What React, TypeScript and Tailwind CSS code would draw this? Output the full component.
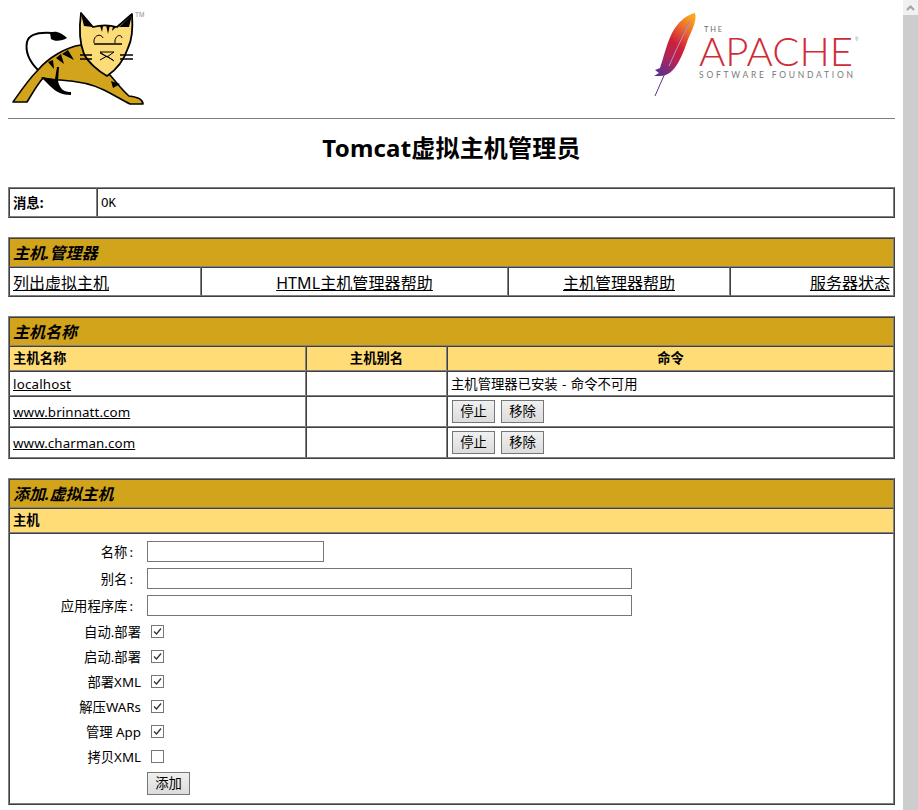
import React from "react";

const font = { fontFamily: '"Noto Sans", "Noto Sans CJK SC", sans-serif' };
const table =
  "w-full table-fixed border-separate border-spacing-0 border border-t-[#808080] border-l-[#808080] border-r-[#404040] border-b-[#404040]";
const cell =
  "border border-t-[#404040] border-l-[#404040] border-r-[#808080] border-b-[#808080] px-[3px] py-0 align-middle";
const textCell =
  "border border-t-[#404040] border-l-[#404040] border-r-[#808080] border-b-[#808080] px-[3px] pt-[2px] pb-0 align-middle";
const titleCell = `${cell} bg-[#d2a41c] h-[29px] text-[16px] font-bold italic text-left`;
const headCell = `${cell} bg-[#ffdc75] h-[25px] text-[13.33px] font-bold`;

function TomcatLogo() {
  return (
    <svg width="140" height="100" viewBox="8 8 140 100" className="block" aria-label="Tomcat logo">
      <path d="M38 70 C30 62 25 52 27 42 C29 34 38 32 52 33" fill="none" stroke="#000" strokeWidth="2" />
      <path d="M50 33 C55 30 62 33 67 38 C62 41 55 42 51 39 Z" fill="#000" />
      <path
        d="M81 45 C66 47 48 58 38 70 C28 80 20 92 13 102 L27 102 C32 94 37 85 43 78 C48 80 54 80 60 80 C78 81 92 84 104 90 C114 95 122 100 130 104 L143 104 C143 100 138 97 129 96 C122 90 117 83 110 75 L96 60 Z"
        fill="#d2a41c"
        stroke="#000"
        strokeWidth="1.6"
        strokeLinejoin="round"
      />
      <path d="M41 77 L50 86 C56 92 62 95 71 95 L71 92 C65 92 60 90 58 81 L59 67 L57 67 L55 79 Z" fill="#000" />
      <path d="M68 50 L74 60 L62 54 Z M56 58 L64 64 L61 54 Z M48 62 L54 69 L53 60 Z M111 81 L120 84 L113 88 Z" fill="#000" />
      <path
        d="M81 13 L93 27 C100 25 110 25 117 27 L132 14 C133 28 132 40 128 48 C124 60 116 70 107 76 C98 71 88 62 84 54 C80 44 79 28 81 13 Z"
        fill="#fbdc78"
        stroke="#000"
        strokeWidth="1.8"
        strokeLinejoin="round"
      />
      <path d="M81 14 L93 27 L84 26 Z M132 15 L119 27 L129 27 Z M106 25 L108 34 L110 25 Z M100 26 L102 32 L103 26 Z M113 26 L112 31 L116 27 Z" fill="#000" />
      <path d="M94 44 H122" stroke="#000" strokeWidth="1.5" />
      <path d="M94 43 C93 35 101 33 103 38 M115 43 C114 36 121 33 122 38" fill="none" stroke="#000" strokeWidth="1" />
      <path d="M80 55 H92 M80 59 H92 M120 55 H133 M120 59 H133" stroke="#000" strokeWidth="1.5" />
      <path d="M100 52 H114 L107 57 Z" fill="none" stroke="#000" strokeWidth="1" />
      <path d="M100 60 L107 56 L114 61 M100 53 L113 60" fill="none" stroke="#000" strokeWidth="1" />
      <text x="135" y="17" fontSize="6.5" fill="#8a8a8a" fontFamily="Liberation Sans">TM</text>
    </svg>
  );
}

function ApacheLogo() {
  return (
    <svg width="212" height="90" viewBox="650 10 212 90" className="block" aria-label="Apache logo">
      <defs>
        <linearGradient id="feather" x1="0.8" y1="0" x2="0.2" y2="1">
          <stop offset="0" stopColor="#f9a51f" />
          <stop offset="0.25" stopColor="#e8622e" />
          <stop offset="0.48" stopColor="#cf2038" />
          <stop offset="0.72" stopColor="#b0245a" />
          <stop offset="1" stopColor="#5f2f8c" />
        </linearGradient>
      </defs>
      <path
        d="M695 13 C686 15 678 22 672 33 C667 43 664 56 660 68 L655 70 L659 73 L654 76 L660 76 C668 76 674 70 678 63 C683 55 686 44 689 37 C693 28 697 20 695 13 Z"
        fill="url(#feather)"
      />
      <path d="M690 21 C680 40 668 66 655 96" fill="none" stroke="#6b2f8a" strokeWidth="1" />
      <path d="M690 21 C684 33 676 50 669 66" fill="none" stroke="#fff" strokeWidth="0.7" opacity="0.7" />
      <text x="704" y="32" fontSize="7.5" fill="#6e6e6e" fontFamily="Lato" textLength="18">THE</text>
      <text x="699" y="66" fontSize="40" fill="#cf2c37" fontFamily="Lato" fontWeight="300" textLength="154" lengthAdjust="spacingAndGlyphs">APACHE</text>
      <text x="699" y="78" fontSize="8.5" fill="#7a7a7a" fontFamily="Lato" textLength="154">SOFTWARE FOUNDATION</text>
      <text x="855" y="41" fontSize="4.5" fill="#8a8a8a" fontFamily="Liberation Sans">®</text>
    </svg>
  );
}

function InputRow({ label, wide }: { label: string; wide?: boolean }) {
  return (
    <div className="flex h-[27px] items-center">
      <span className="w-[120px] pt-[2px] text-right">
        {label}
        <span className="ml-[2px]">:</span>
      </span>
      <span className="w-[14px]" />
      <input
        type="text"
        className={`h-[21px] border border-[#767676] bg-white ${wide ? "w-[485px]" : "w-[177px]"}`}
      />
    </div>
  );
}

function CheckRow({ label, checked }: { label: string; checked: boolean }) {
  return (
    <div className="flex h-[25px] items-center">
      <span className="w-[128px] pt-[2px] text-right">{label}</span>
      <span className="w-[10px]" />
      <span className="flex h-[13px] w-[13px] items-center justify-center border border-[#767676] bg-white">
        {checked && (
          <svg width="11" height="11" viewBox="0 0 11 11">
            <path d="M2 5.5 L4.5 8 L9 2.5" fill="none" stroke="#333" strokeWidth="1.3" />
          </svg>
        )}
      </span>
    </div>
  );
}

function Btn({ children }: { children: React.ReactNode }) {
  return (
    <button
      type="button"
      className="h-[23px] w-[43px] border border-[#767676] bg-linear-to-b from-[#f0f0f0] to-[#dcdcdc] text-[13.33px] text-black"
    >
      {children}
    </button>
  );
}

function HostRow({ name }: { name: string }) {
  return (
    <tr>
      <td className={`${textCell} h-[31px]`}>
        <a href="#" className="tracking-[0.1px] underline">{name}</a>
      </td>
      <td className={cell}></td>
      <td className={cell}>
        <div className="flex gap-[6px] pl-[1px]">
          <Btn>停止</Btn>
          <Btn>移除</Btn>
        </div>
      </td>
    </tr>
  );
}

export default function App() {
  return (
    <div className="flex h-[810px] w-[918px] overflow-hidden bg-white text-[13.33px] text-black" style={font}>
      <main className="w-[903px] shrink-0 px-2">
        <div className="flex h-[118px] items-start justify-between pt-[5px]">
          <div className="pt-[3px] pl-0"><TomcatLogo /></div>
          <div className="pt-[5px] pr-[33px]"><ApacheLogo /></div>
        </div>
        <hr className="border-0 border-t border-[#808080]" />
        <h1 className="mt-[11px] mb-[22px] h-[35px] text-center text-[24px] leading-[35px] font-bold tracking-[0.2px]">
          Tomcat虚拟主机管理员
        </h1>

        <table className={table}>
          <colgroup>
            <col className="w-[88px]" />
            <col />
          </colgroup>
          <tbody>
            <tr>
              <td className={`${textCell} h-[29px] font-bold`}>消息:</td>
              <td className={textCell}>
                <span className="text-[12.5px]" style={{ fontFamily: '"Liberation Mono", monospace' }}>OK</span>
              </td>
            </tr>
          </tbody>
        </table>

        <table className={`${table} mt-[19px]`}>
          <colgroup>
            <col className="w-[192px]" />
            <col className="w-[307px]" />
            <col className="w-[222px]" />
            <col />
          </colgroup>
          <tbody>
            <tr>
              <td colSpan={4} className={titleCell}>主机.管理器</td>
            </tr>
            <tr className="text-[16px]">
              <td className={`${textCell} h-[29px] text-left`}><a href="#" className="underline">列出虚拟主机</a></td>
              <td className={`${textCell} text-center`}><a href="#" className="tracking-[0.1px] underline">HTML主机管理器帮助</a></td>
              <td className={`${textCell} text-center`}><a href="#" className="underline">主机管理器帮助</a></td>
              <td className={`${textCell} text-right`}><a href="#" className="underline">服务器状态</a></td>
            </tr>
          </tbody>
        </table>

        <table className={`${table} mt-[19px]`}>
          <colgroup>
            <col className="w-[297px]" />
            <col className="w-[141px]" />
            <col />
          </colgroup>
          <tbody>
            <tr>
              <td colSpan={3} className={titleCell}>主机名称</td>
            </tr>
            <tr>
              <td className={`${headCell} text-left`}>主机名称</td>
              <td className={`${headCell} text-center`}>主机别名</td>
              <td className={`${headCell} text-center`}>命令</td>
            </tr>
            <tr>
              <td className={`${textCell} h-[25px]`}><a href="#" className="tracking-[0.2px] underline">localhost</a></td>
              <td className={cell}></td>
              <td className={`${textCell} [word-spacing:1px]`}>主机管理器已安装 - 命令不可用</td>
            </tr>
            <HostRow name="www.brinnatt.com" />
            <HostRow name="www.charman.com" />
          </tbody>
        </table>

        <table className={`${table} mt-[19px]`}>
          <tbody>
            <tr>
              <td className={titleCell}>添加.虚拟主机</td>
            </tr>
            <tr>
              <td className={`${headCell} text-left`}>主机</td>
            </tr>
            <tr>
              <td className={`${cell} h-[271px] pt-[4px]`}>
                <div className="flex h-full flex-col">
                  <InputRow label="名称" />
                  <InputRow label="别名" wide />
                  <InputRow label="应用程序库" wide />
                  <CheckRow label="自动.部署" checked />
                  <CheckRow label="启动.部署" checked />
                  <CheckRow label="部署XML" checked />
                  <CheckRow label="解压WARs" checked />
                  <CheckRow label="管理 App" checked />
                  <CheckRow label="拷贝XML" checked={false} />
                  <div className="mt-[3px] pl-[134px]"><Btn>添加</Btn></div>
                </div>
              </td>
            </tr>
          </tbody>
        </table>
      </main>
      <aside className="flex h-full w-[15px] shrink-0 flex-col bg-[#cdcdcd]">
        <div className="flex h-[15px] items-center justify-center bg-[#f1f1f1]">
          <svg width="9" height="6" viewBox="0 0 9 6">
            <path d="M1 5 L4.5 1.5 L8 5" fill="none" stroke="#a3a3a3" strokeWidth="2" />
          </svg>
        </div>
      </aside>
    </div>
  );
}
